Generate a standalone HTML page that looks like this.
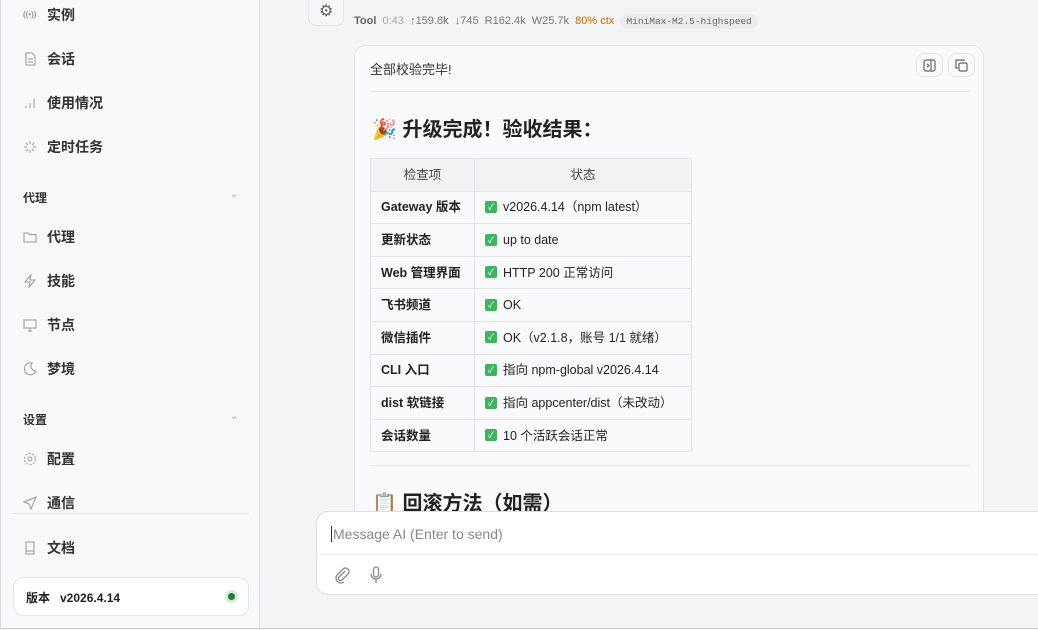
<!DOCTYPE html>
<html><head><meta charset="utf-8"><style>
*{box-sizing:border-box;margin:0;padding:0}
body{width:1038px;height:630px;overflow:hidden;background:#f3f4f6;font-family:"Liberation Sans","Noto Sans CJK SC",sans-serif;color:#222;position:relative}
.side{position:absolute;left:0;top:0;width:260px;height:628px;background:#f8f9fa;border-right:1px solid #e3e5e8;border-left:1px solid #d9dbde}
.it{position:absolute;left:22px;font-size:14px;font-weight:bold;color:#333;display:flex;align-items:center;gap:10px}
.ic{width:14px;height:14px;display:inline-block;color:#999}
.sec{position:absolute;left:22px;font-size:12px;font-weight:bold;color:#333}
.chev{position:absolute;left:229px;font-size:10px;color:#aaa}
.ver{position:absolute;left:12px;top:577px;width:236px;height:39px;background:#fff;border:1px solid #e6e7ea;border-radius:10px;font-size:12px;font-weight:bold;padding:11px 12px;color:#222}
.dot{position:absolute;right:10px;top:12px;width:13px;height:13px;border-radius:50%;background:#d4eddc}
.dot::after{content:"";position:absolute;left:3px;top:3px;width:7px;height:7px;border-radius:50%;background:#1a7f37}
.gear{position:absolute;left:308px;top:-8px;width:36px;height:34px;background:#f5f6f7;border:1px solid #e3e5e8;border-radius:8px}
.meta{position:absolute;left:354px;top:15px;font-size:11px;color:#777;white-space:nowrap}
.card{position:absolute;left:354px;top:45px;width:630px;height:480px;background:#f9fafb;border:1px solid #e3e5e8;border-radius:12px}
.btn{position:absolute;top:7px;width:27px;height:24px;border:1px solid #e3e5e8;border-radius:8px;background:#f9fafb}
table{position:absolute;left:15px;top:112px;border-collapse:collapse;font-size:12.5px}
td,th{border:1px solid #e3e5e8;height:32.6px;padding:0 10px;text-align:left;vertical-align:middle;line-height:16px}
th{font-weight:normal;text-align:center;background:#f1f2f4;color:#444}
td:first-child{font-weight:bold;width:104px}
td:last-child{width:217px}
.ck{display:inline-block;width:12px;height:12px;background:#3cb55c;border-radius:2px;color:#fff;font-size:9px;line-height:12px;text-align:center;margin-right:6px;vertical-align:middle;position:relative;top:-1px}
.inp{position:absolute;left:316px;top:511px;width:740px;height:84px;background:#fff;border:1px solid #dcdee2;border-radius:12px}
</style></head><body>
<div class="side">
<div class="it" style="top:5px"><span class="ic" style="font-size:8px;line-height:14px">((•))</span>实例</div>
<div class="it" style="top:49px"><svg class="ic" viewBox="0 0 14 14" fill="none" stroke="#999"><path d="M3 1h6l3 3v9H3z M5 7h5M5 10h5"/></svg>会话</div>
<div class="it" style="top:93px"><svg class="ic" viewBox="0 0 14 14" stroke="#999"><path d="M3 12v-2M7 12V7M11 12V3"/></svg>使用情况</div>
<div class="it" style="top:137px"><svg class="ic" viewBox="0 0 14 14" stroke="#999"><path d="M7 1v3M7 10v3M1 7h3M10 7h3M3 3l2 2M9 9l2 2M11 3L9 5M3 11l2-2"/></svg>定时任务</div>
<div class="sec" style="top:189px">代理</div><div class="chev" style="top:189px">⌄</div>
<div class="it" style="top:227px"><svg class="ic" viewBox="0 0 14 14" fill="none" stroke="#999"><path d="M1 3h4l1 1.5h7V12H1z"/></svg>代理</div>
<div class="it" style="top:271px"><svg class="ic" viewBox="0 0 14 14" fill="none" stroke="#999"><path d="M8 1L2 8h5l-1 5 6-7H7z"/></svg>技能</div>
<div class="it" style="top:315px"><svg class="ic" viewBox="0 0 14 14" fill="none" stroke="#999"><path d="M1 2h12v8H1zM5 13h4M7 10v3"/></svg>节点</div>
<div class="it" style="top:359px"><svg class="ic" viewBox="0 0 14 14" fill="none" stroke="#999"><path d="M9 1a6 6 0 1 0 4 8A5 5 0 0 1 9 1z"/></svg>梦境</div>
<div class="sec" style="top:411px">设置</div><div class="chev" style="top:411px">⌄</div>
<div class="it" style="top:449px"><svg class="ic" viewBox="0 0 14 14" fill="none" stroke="#999"><circle cx="7" cy="7" r="2"/><circle cx="7" cy="7" r="5.5" stroke-dasharray="2 1.5"/></svg>配置</div>
<div class="it" style="top:493px"><svg class="ic" viewBox="0 0 14 14" fill="none" stroke="#999"><path d="M13 1L1 6l5 2 2 5z"/></svg>通信</div>
<div style="position:absolute;left:12px;top:513px;width:236px;border-top:1px solid #e3e5e8"></div>
<div class="it" style="top:538px"><svg class="ic" viewBox="0 0 14 14" fill="none" stroke="#999"><path d="M3 1h8v12H3zM3 10h8"/></svg>文档</div>
<div class="ver">版本&nbsp;&nbsp; v2026.4.14<div class="dot"></div></div>
</div>
<div class="gear"><span style="position:absolute;left:10px;top:8px;font-size:16px;color:#666">⚙</span></div>
<div class="meta"><b style="color:#666">Tool</b>&nbsp; <span style="color:#aaa">0:43</span>&nbsp; ↑159.8k&nbsp; ↓745&nbsp; R162.4k&nbsp; W25.7k&nbsp; <span style="color:#c86a00">80% ctx</span>&nbsp; <span style="font-family:'Liberation Mono',monospace;font-size:9.5px;background:#ebecee;border-radius:8px;padding:2px 6px;color:#666">MiniMax-M2.5-highspeed</span></div>
<div class="card">
<div style="position:absolute;left:15px;top:13px;font-size:13px;color:#333">全部校验完毕!</div>
<div class="btn" style="left:561px"><svg style="position:absolute;left:6px;top:5px" width="13" height="13" viewBox="0 0 13 13" fill="none" stroke="#666" stroke-width="1.2"><rect x="1" y="1" width="11" height="11" rx="2"/><path d="M8 1v11M4 5l2 1.5L4 8"/></svg></div>
<div class="btn" style="left:593px"><svg style="position:absolute;left:6px;top:5px" width="13" height="13" viewBox="0 0 13 13" fill="none" stroke="#666" stroke-width="1.2"><rect x="4" y="4" width="8" height="8" rx="1.5"/><path d="M9 2V1H1v8h2"/></svg></div>
<div style="position:absolute;left:15px;top:45px;width:600px;border-top:1px solid #e3e5e8"></div>
<div style="position:absolute;left:17px;top:67px;font-size:20px;font-weight:bold;color:#222">🎉 升级完成！验收结果：</div>
<table>
<tr><th>检查项</th><th>状态</th></tr>
<tr><td>Gateway 版本</td><td><span class="ck">✓</span>v2026.4.14（npm latest）</td></tr>
<tr><td>更新状态</td><td><span class="ck">✓</span>up to date</td></tr>
<tr><td>Web 管理界面</td><td><span class="ck">✓</span>HTTP 200 正常访问</td></tr>
<tr><td>飞书频道</td><td><span class="ck">✓</span>OK</td></tr>
<tr><td>微信插件</td><td><span class="ck">✓</span>OK（v2.1.8，账号 1/1 就绪）</td></tr>
<tr><td>CLI 入口</td><td><span class="ck">✓</span>指向 npm-global v2026.4.14</td></tr>
<tr><td>dist 软链接</td><td><span class="ck">✓</span>指向 appcenter/dist（未改动）</td></tr>
<tr><td>会话数量</td><td><span class="ck">✓</span>10 个活跃会话正常</td></tr>
</table>
<div style="position:absolute;left:15px;top:419px;width:600px;border-top:1px solid #e3e5e8"></div>
<div style="position:absolute;left:17px;top:441px;font-size:20px;font-weight:bold;color:#222">📋 回滚方法（如需）</div>
</div>
<div class="inp">
<div style="position:absolute;left:14px;top:14px;font-size:14px;color:#888;border-left:1px solid #333;padding-left:1px">Message AI (Enter to send)</div>
<div style="position:absolute;left:0;top:42px;width:100%;border-top:1px solid #eef0f2"></div>
<svg style="position:absolute;left:17px;top:54px" width="16" height="18" viewBox="0 0 16 18" fill="none" stroke="#888" stroke-width="1.3"><path d="M11 5l-6 6a2 2 0 0 0 3 3l6-6a3.5 3.5 0 0 0-5-5L3 9a5 5 0 0 0 7 7"/></svg>
<svg style="position:absolute;left:52px;top:54px" width="14" height="18" viewBox="0 0 14 18" fill="none" stroke="#888" stroke-width="1.3"><rect x="4.5" y="1" width="5" height="10" rx="2.5"/><path d="M2 8a5 5 0 0 0 10 0M7 13v4"/></svg>
</div>
<div style="position:absolute;left:0;top:628px;width:1038px;border-top:1px solid #ccc"></div>
</body></html>
